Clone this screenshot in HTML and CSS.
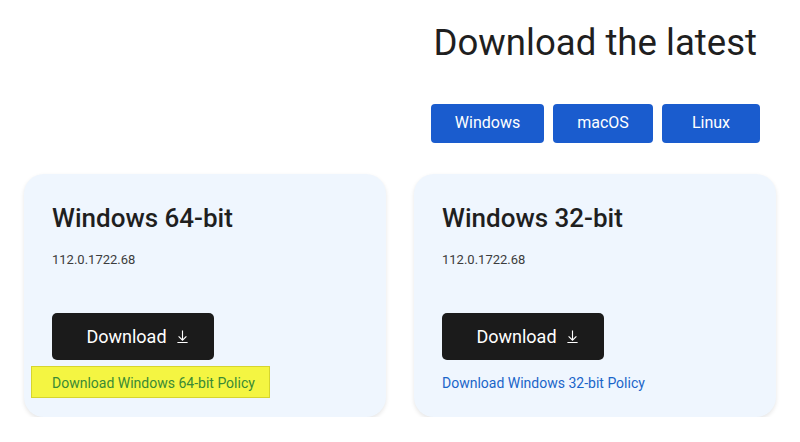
FILE: index.html
```html
<!DOCTYPE html>
<html>
<head>
<meta charset="utf-8">
<link rel="stylesheet" href="styles.css">
</head>
<body>
<section class="top">
  <div class="top-inner">
    <h1 class="title">Download the latest</h1>
    <div class="tabs">
      <button class="tab tab-win">Windows</button>
      <button class="tab tab-mac">macOS</button>
      <button class="tab tab-linux">Linux</button>
    </div>
  </div>
</section>
<section class="cards">
  <div class="card">
    <h2 class="card-title">Windows 64-bit</h2>
    <p class="version">112.0.1722.68</p>
    <button class="dl">Download
      <svg class="dl-icon" viewBox="0 0 14 16" width="13" height="15"><path d="M7 1.5V12M2.8 7.8L7 12l4.2-4.2M1.5 14.5h11" fill="none" stroke="#fff" stroke-width="1.2"/></svg>
    </button>
    <div class="policy-wrap highlighted"><a class="policy green" href="#">Download Windows 64-bit Policy</a></div>
  </div>
  <div class="card">
    <h2 class="card-title">Windows 32-bit</h2>
    <p class="version">112.0.1722.68</p>
    <button class="dl">Download
      <svg class="dl-icon" viewBox="0 0 14 16" width="13" height="15"><path d="M7 1.5V12M2.8 7.8L7 12l4.2-4.2M1.5 14.5h11" fill="none" stroke="#fff" stroke-width="1.2"/></svg>
    </button>
    <div class="policy-wrap"><a class="policy" href="#">Download Windows 32-bit Policy</a></div>
  </div>
</section>
</body>
</html>
```

FILE: styles.css
```css
html, body {
  margin: 0;
  padding: 0;
  background: #ffffff;
  font-family: Roboto, "Liberation Sans", sans-serif;
  color: #1f1f1f;
}
.top {
  display: flex;
  justify-content: flex-end;
  padding: 17px 40px 0 0;
}
.top-inner {
  display: flex;
  flex-direction: column;
  align-items: flex-end;
}
.title {
  margin: 0;
  font-weight: 400;
  font-size: 36.6px;
  line-height: 52px;
  color: #1f1f1f;
  padding-right: 3px;
}
.tabs {
  display: flex;
  gap: 9px;
  margin-top: 35px;
}
.tab {
  border: none;
  background: #1a5cce;
  color: #fff;
  font-family: Roboto, "Liberation Sans", sans-serif;
  font-size: 16px;
  height: 39px;
  border-radius: 4px;
  padding: 0 0 2px 0;
}
.tab-win { width: 113px; }
.tab-mac { width: 100px; }
.tab-linux { width: 98px; }
.cards {
  display: flex;
  gap: 28px;
  padding: 31px 24px 0 24px;
}
.card {
  flex: 1;
  height: 243px;
  background: #eff6fe;
  border-radius: 20px;
  box-shadow: 0 2px 4px rgba(0,0,0,0.10);
  padding: 28px 28px 0 28px;
  box-sizing: border-box;
}
.card-title {
  margin: 0;
  font-size: 26px;
  font-weight: 500;
  line-height: 32px;
  color: #1f1f1f;
}
.version {
  margin: 17px 0 0 0;
  font-size: 13px;
  line-height: 18px;
  color: #3c3c3c;
}
.dl {
  margin-top: 44px;
  width: 162px;
  height: 47px;
  background: #1b1b1b;
  color: #fff;
  border: none;
  border-radius: 5px;
  font-family: Roboto, "Liberation Sans", sans-serif;
  font-size: 18px;
  display: flex;
  align-items: center;
  justify-content: center;
  gap: 9px;
  padding: 0 0 1px 9px;
}
.dl-icon { display: block; }
.policy-wrap {
  margin: 6px 0 0 -21px;
  padding: 6px 14px 4px 20px;
  display: inline-block;
  border: 1px solid transparent;
}
.highlighted {
  background: #f4f542;
  border-color: #d6d52e;
}
.policy {
  font-size: 14px;
  line-height: 20px;
  color: #1a65c9;
  text-decoration: none;
}
.green { color: #3a8a35; }
```
